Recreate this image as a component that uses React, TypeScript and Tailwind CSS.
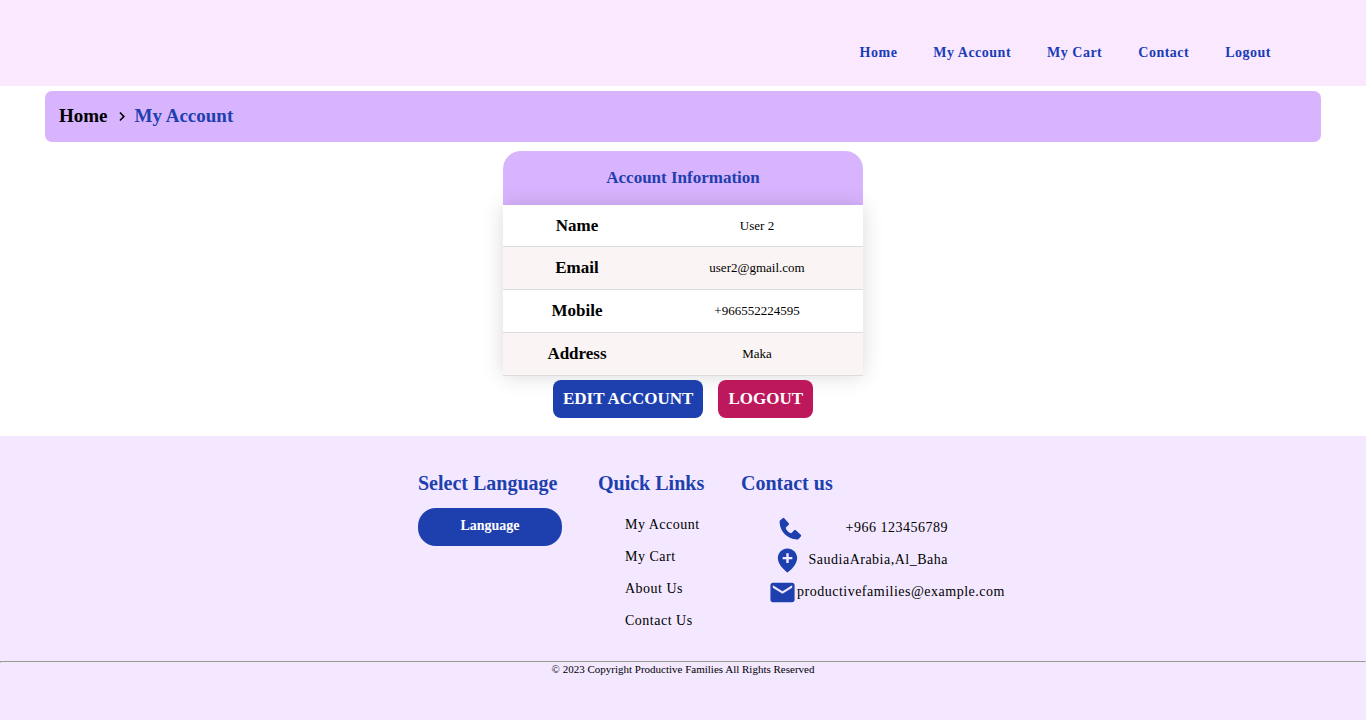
import type { ReactNode } from "react";
import { BiChevronRight, BiSolidLocationPlus, BiSolidPhone } from "react-icons/bi";
import { MdEmail } from "react-icons/md";

const navLinks = ["Home", "My Account", "My Cart", "Contact", "Logout"];

const account = [
  { label: "Name", value: "User 2" },
  { label: "Email", value: "user2@gmail.com" },
  { label: "Mobile", value: "+966552224595" },
  { label: "Address", value: "Maka" },
];

const quickLinks = ["My Account", "My Cart", "About Us", "Contact Us"];

function Header() {
  return (
    <header className="bg-[#fae8ff] pt-[41px] pb-[21px] pr-[95px]">
      <nav className="flex justify-end gap-9 text-[14px] leading-6 font-bold tracking-[0.5px] text-blue-800">
        {navLinks.map((label) => (
          <a key={label} href="#">
            {label}
          </a>
        ))}
      </nav>
    </header>
  );
}

function Breadcrumb() {
  return (
    <nav
      aria-label="Breadcrumb"
      className="mx-[45px] mt-[5px] flex items-center rounded-[7px] bg-[#d8b4fe] px-[14px] pt-[13px] pb-[14px] text-[19px] leading-6 font-bold"
    >
      <a href="#">Home</a>
      <BiChevronRight className="mx-1 size-[19px]" aria-hidden="true" />
      <a href="#" className="text-[#1e40af]">
        My Account
      </a>
    </nav>
  );
}

function AccountCard() {
  return (
    <section className="mx-auto mt-[9px] w-[360px]">
      <h2 className="rounded-t-[18px] bg-[#d8b4fe] py-[15px] text-center text-[17px] leading-6 font-bold text-[#1e40af]">
        Account Information
      </h2>
      <table className="relative h-[171px] w-full border-collapse text-center shadow-[0_0_20px_rgba(0,0,0,0.15)]">
        <tbody>
          {account.map(({ label, value }) => (
            <tr key={label} className="border-b border-[#dddddd] bg-white even:bg-[#faf4f4]">
              <th scope="row" className="w-[148px] text-[17px] leading-5 font-bold">
                {label}
              </th>
              <td className="text-[13px] leading-5">{value}</td>
            </tr>
          ))}
        </tbody>
      </table>
      <div className="relative mt-1 flex justify-center gap-[15px] text-[17px] leading-[22px] font-bold text-white">
        <button type="button" className="rounded-lg bg-[#1e40af] px-[10px] py-2">
          EDIT ACCOUNT
        </button>
        <button type="button" className="rounded-lg bg-[#be185d] px-[10px] py-2">
          LOGOUT
        </button>
      </div>
    </section>
  );
}

function FooterHeading({ children }: { children: ReactNode }) {
  return <h3 className="text-[20px] leading-6 font-bold tracking-normal text-[#1e40af]">{children}</h3>;
}

function Footer() {
  return (
    <footer className="mt-[18px] grow bg-[#f3e8ff]">
      <div className="flex justify-center pt-[35px] text-[14px] tracking-[0.5px]">
        <div className="w-[180px]">
          <FooterHeading>Select Language</FooterHeading>
          <button
            type="button"
            className="mt-[13px] w-36 rounded-[18px] bg-[#1e40af] pt-2 pb-[10px] leading-5 font-bold tracking-normal text-white"
          >
            Language
          </button>
        </div>
        <div className="w-[143px]">
          <FooterHeading>Quick Links</FooterHeading>
          <ul className="mt-[14px] pl-[27px] leading-8">
            {quickLinks.map((label) => (
              <li key={label}>
                <a href="#">{label}</a>
              </li>
            ))}
          </ul>
        </div>
        <div className="w-[207px]">
          <FooterHeading>Contact us</FooterHeading>
          <ul className="mt-[17px] leading-8">
            <li className="flex items-center justify-between pl-[35px]">
              <BiSolidPhone className="size-[29px] text-[#1e40af]" aria-hidden="true" />
              <span>+966 123456789</span>
            </li>
            <li className="flex items-center justify-between pl-8">
              <BiSolidLocationPlus className="size-[29px] text-[#1e40af]" aria-hidden="true" />
              <span>SaudiaArabia,Al_Baha</span>
            </li>
            <li className="flex items-center pl-[27px]">
              <MdEmail className="size-[29px] shrink-0 text-[#1e40af]" aria-hidden="true" />
              <a href="#">productivefamilies@example.com</a>
            </li>
          </ul>
        </div>
      </div>
      <hr className="mt-6 border border-t-[#9a9a9a] border-r-[#eeeeee] border-b-[#eeeeee] border-l-[#9a9a9a]" />
      <p className="text-center text-[11px] leading-3">
        © 2023 Copyright Productive Families All Rights Reserved
      </p>
    </footer>
  );
}

export default function App() {
  return (
    <div className="flex min-h-screen flex-col bg-white font-['Liberation_Serif',serif] text-black">
      <Header />
      <Breadcrumb />
      <AccountCard />
      <Footer />
    </div>
  );
}
